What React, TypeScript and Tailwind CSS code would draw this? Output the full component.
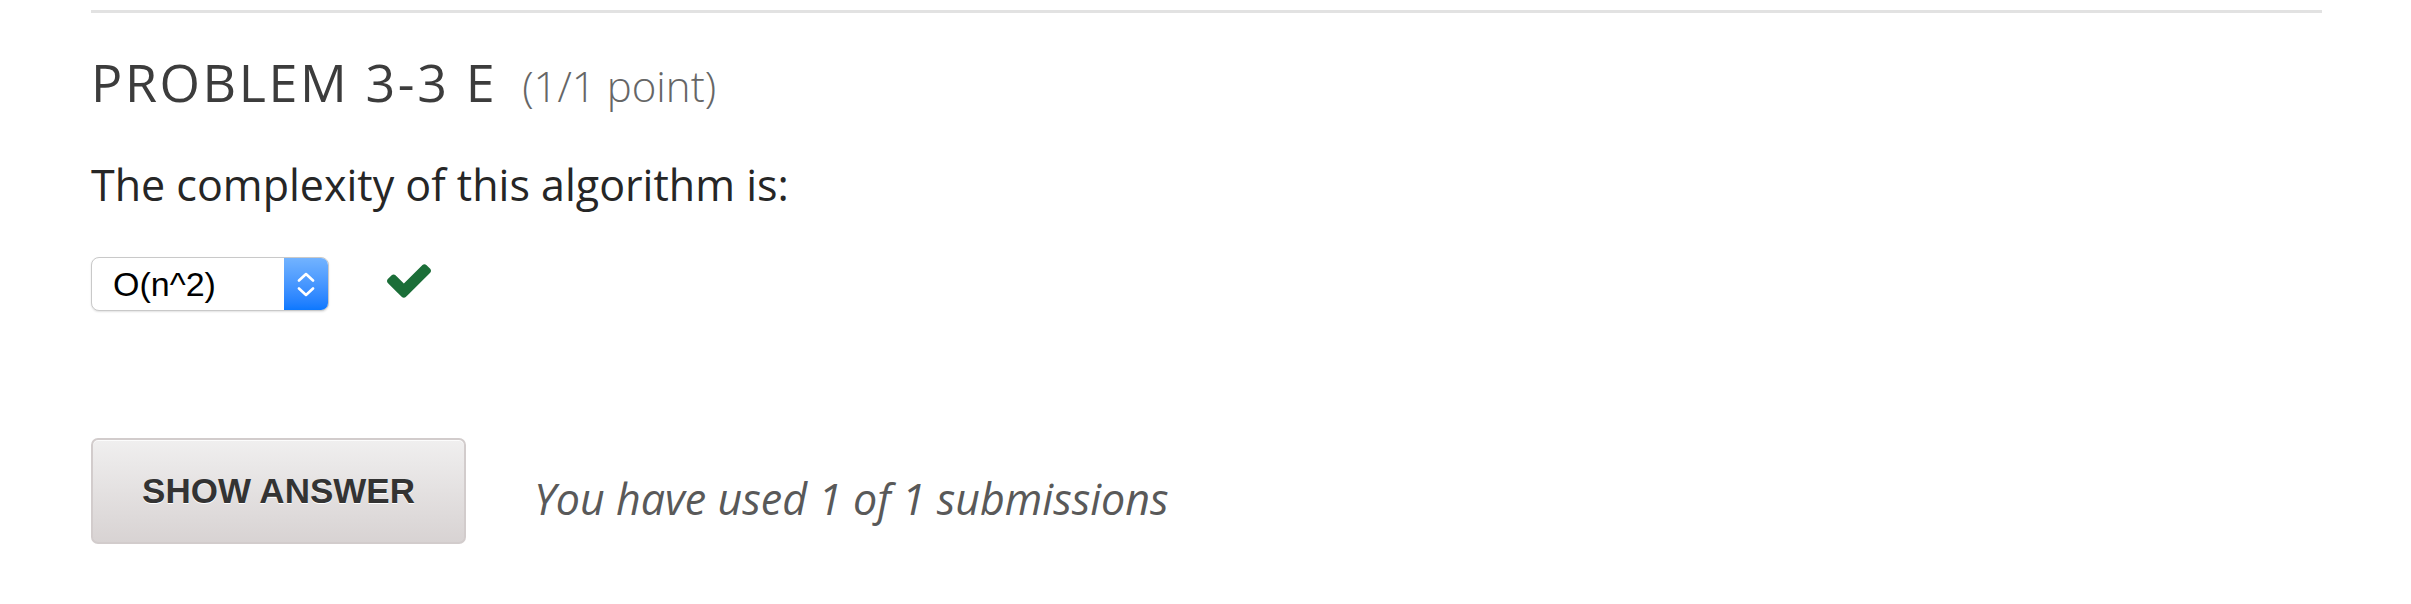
export default function App() {
  return (
    <main className="min-h-[604px] bg-white pt-[10px] pl-[91px] pr-[89px] font-['Open_Sans',sans-serif]">
      {/* Divider */}
      <div className="border-t-[3px] border-[#e2e2e2]" />

      {/* Problem header */}
      <h2 className="mt-[34px] flex items-baseline leading-[70px]">
        <span className="text-[52px] font-normal text-[#3c3c3c] tracking-[0.05em]">PROBLEM 3-3 E</span>
        <span className="ml-[25px] text-[42px] leading-none font-light text-[#666]">(1/1 point)</span>
      </h2>

      {/* Question */}
      <p className="mt-[36px] text-[43px] leading-[64px] text-[#262626]">The complexity of this algorithm is:</p>

      {/* Answer row */}
      <div className="mt-[40px] flex items-start">
        <div className="flex h-[54px] w-[238px] overflow-hidden rounded-[8px] border border-[#c9c9c9] bg-white shadow-[0_1px_2px_rgba(0,0,0,0.12)]">
          <div className="flex flex-1 items-center pl-[21px] font-['Liberation_Sans',Arial,sans-serif] text-[34px] text-black">
            O(n^2)
          </div>
          <div className="flex w-[44px] flex-col items-center justify-center gap-[5px] bg-gradient-to-b from-[#72b3ff] to-[#0a78ff]">
            <svg width="18" height="10" viewBox="0 0 18 10" fill="none">
              <path d="M2 8.5 L9 2 L16 8.5" stroke="white" strokeWidth="2.6" strokeLinecap="round" strokeLinejoin="round" />
            </svg>
            <svg width="18" height="10" viewBox="0 0 18 10" fill="none">
              <path d="M2 1.5 L9 8 L16 1.5" stroke="white" strokeWidth="2.6" strokeLinecap="round" strokeLinejoin="round" />
            </svg>
          </div>
        </div>
        <svg className="ml-[58px] mt-[7px]" width="44" height="34" viewBox="121 334 1550 1188">
          <path
            fill="#1b6e38"
            d="M1671 566q0 40-28 68l-724 724-136 136q-28 28-68 28t-68-28l-136-136-362-362q-28-28-28-68t28-68l136-136q28-28 68-28t68 28l294 295 656-657q28-28 68-28t68 28l136 136q28 28 28 68z"
          />
        </svg>
      </div>

      {/* Actions */}
      <div className="mt-[127px] flex items-start">
        <button className="h-[106px] w-[375px] rounded-[7px] border-2 border-[#d2cccc] bg-gradient-to-b from-[#f0efef] to-[#d8d3d3] font-['Liberation_Sans',Arial,sans-serif] text-[35px] font-bold text-[#333] shadow-[inset_0_1px_0_rgba(255,255,255,0.8)] [text-shadow:0_1px_0_#fff]">
          SHOW ANSWER
        </button>
        <p className="ml-[68px] mt-[32px] text-[43px] leading-[58px] italic text-[#595959]">
          You have used 1 of 1 submissions
        </p>
      </div>
    </main>
  );
}
